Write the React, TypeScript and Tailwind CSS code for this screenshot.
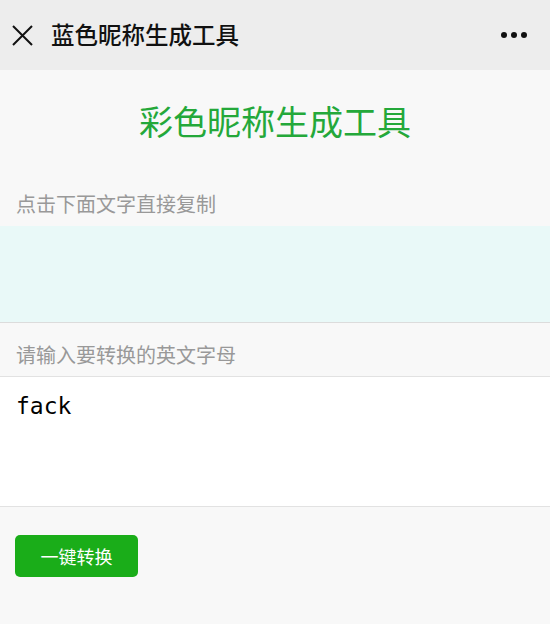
import React from "react";

export default function App() {
  const font = { fontFamily: '"Noto Sans CJK SC", "Noto Sans", sans-serif' };
  return (
    <div className="w-[550px] h-[624px] bg-[#f8f8f8] flex flex-col" style={font}>
      <div className="h-[70px] bg-[#ededed] flex items-center pl-[12px] pr-[23px]">
        <svg width="21" height="21" viewBox="0 0 21 21" className="shrink-0">
          <path d="M1 1 L20 20 M20 1 L1 20" stroke="#111" strokeWidth="2" fill="none" />
        </svg>
        <div className="ml-[18px] text-[23.5px] font-medium text-[#111] leading-none">蓝色昵称生成工具</div>
        <div className="ml-auto flex gap-[4px] items-center">
          <span className="w-[6px] h-[6px] rounded-full bg-[#111]" />
          <span className="w-[6px] h-[6px] rounded-full bg-[#111]" />
          <span className="w-[6px] h-[6px] rounded-full bg-[#111]" />
        </div>
      </div>
      <div className="h-[104px] flex items-center justify-center pb-[2px]">
        <div className="text-[34px] text-[#24a83a] leading-none">彩色昵称生成工具</div>
      </div>
      <div className="h-[52px] flex items-center px-[16px] pt-[8px] text-[20px] text-[#999] leading-none">点击下面文字直接复制</div>
      <div className="h-[97px] bg-[#e9f9f8] border-b border-[#dcdcdc]" />
      <div className="h-[53px] flex items-center px-[16px] pt-[10px] text-[20px] text-[#999] leading-none">请输入要转换的英文字母</div>
      <div className="h-[131px] bg-white border-t border-b border-[#e2e2e2] px-[16px] pt-[14px]">
        <div className="text-[23px] text-black leading-[30px]" style={{ fontFamily: '"DejaVu Sans Mono", monospace' }}>fack</div>
      </div>
      <div className="px-[15px] pt-[28px]">
        <button className="w-[123px] h-[42px] bg-[#1aad19] rounded-[5px] text-white text-[18px] leading-none flex items-center justify-center">一键转换</button>
      </div>
    </div>
  );
}
